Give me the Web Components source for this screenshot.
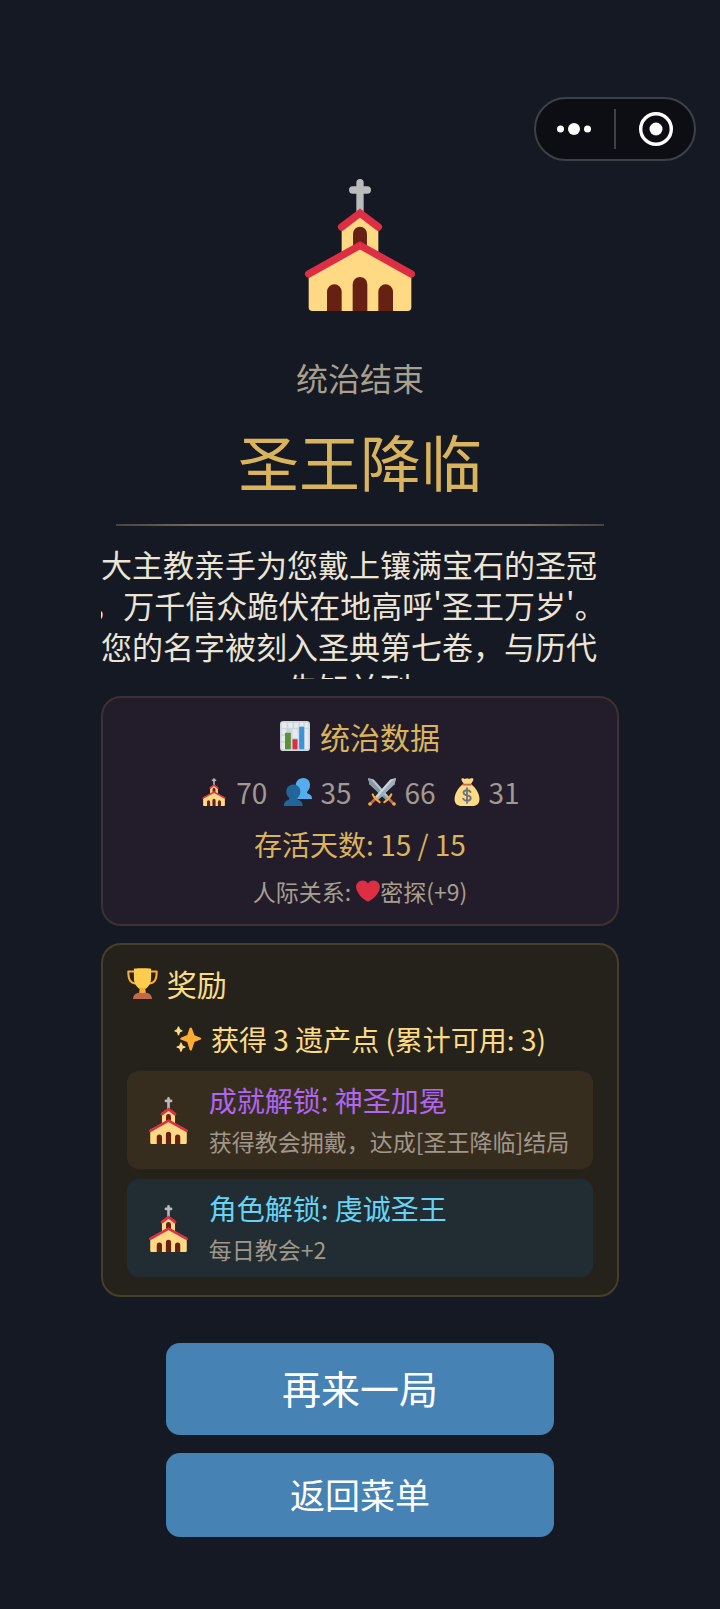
<!DOCTYPE html>
<html lang="zh-CN"><head><meta charset="utf-8"/><meta name="viewport" content="width=device-width, initial-scale=1"/><title>圣王降临</title><style>
    body {
      margin: 0;
      background: #151923;
      color: #ece5d6;
      font-family: "Noto Sans CJK SC", "Noto Sans", sans-serif;
    }
  </style><script>
function createCustomElement(name, elementClass) {
  let templateElement = document.getElementById(name);
  customElements.define(name, elementClass ||
    class extends HTMLElement {
      constructor() {
        super();
        this.attachShadow({mode: 'open'})
          .appendChild(templateElement.content.cloneNode(true));
      }
    }
  );
}
</script></head><body>

<template id="emoji-icon"><style>
  :host {
    display: inline-block;
    flex: none;
    width: var(--icon-size, 28px);
    height: var(--icon-size, 28px);
    white-space: normal;
  }
  svg {
    display: none;
    width: 100%;
    height: 100%;
  }
  :host([name="church"]) .church,
  :host([name="chart"]) .chart,
  :host([name="people"]) .people,
  :host([name="swords"]) .swords,
  :host([name="money"]) .money,
  :host([name="heart"]) .heart,
  :host([name="trophy"]) .trophy,
  :host([name="sparkles"]) .sparkles {
    display: block;
  }
</style>
<svg class="church" viewBox="0 0 36 36" aria-hidden="true">
  <path d="M18 1v9M16 3h4" fill="none" stroke="#b9bbbd" stroke-width="2" stroke-linecap="round"/>
  <path d="M13 12l5-3.500 5 3.500v10H13z" fill="#ffd983"/>
  <path d="M16.100 21v-6.100a1.900 1.900 0 0 1 3.800 0V21z" fill="#662113"/>
  <path d="M4 25l14-7.500L32 25v10a1 1 0 0 1-1 1H5a1 1 0 0 1-1-1z" fill="#ffd983"/>
  <path d="M9 36v-5.300a2 2 0 0 1 4 0V36zM16 36v-7.300a2 2 0 0 1 4 0V36zM23 36v-5.300a2 2 0 0 1 4 0V36z" fill="#662113"/>
  <path d="M13 13.100L18 9.300l5 3.800M4 25.900l14-7.800 14 7.800" fill="none" stroke="#dd2e44" stroke-width="2" stroke-linecap="round"/>
</svg>
<svg class="chart" viewBox="0 0 36 36" aria-hidden="true">
  <rect width="36" height="36" rx="4" fill="#ccd6dd"/>
  <path d="M2 2h6v6H2zM10 2h5v6h-5zM17 2h5v6h-5zM24 2h4v4h-4zM30 2h4v6h-4zM2 10h5v6H2zM15 10h6v6h-6zM2 18h4v6H2zM15 16h7v4h-7zM2 26h4v8H2zM30 10h4v24h-4z" fill="#e7ebef"/>
  <rect x="6" y="14" width="7" height="20" rx="1" fill="#5c913b"/>
  <rect x="15" y="22" width="6" height="12" rx="1" fill="#dd2e44"/>
  <rect x="23" y="7" width="6" height="27" rx="1" fill="#3b94d9"/>
</svg>
<svg class="people" viewBox="0 0 36 36" aria-hidden="true">
  <path d="M25 0c5 0 8.500 3.700 8.500 9 0 3.800-1.500 6.600-3.500 8.200-.800.700-.500 2.300.5 2.700C33.500 21 36 22.500 36 26v1H15V9.500C15 4 19.500 0 25 0z" fill="#55acee"/>
  <path d="M12 8.500c5.200 0 9 3.800 9 9 0 3.500-1.400 6.300-3.300 7.900-.9.800-.6 2.200.5 2.600 3.600 1.300 5.800 3 5.800 8H0c0-5 2.200-6.700 5.800-8 1.100-.4 1.400-1.800.5-2.600C4.400 23.800 3 21 3 17.500c0-5.200 3.800-9 9-9z" fill="#226699"/>
</svg>
<svg class="swords" viewBox="0 0 36 36" aria-hidden="true">
  <path d="M0 0l7.500 2L27 24l-4 4L2 8z" fill="#b5c3cd"/>
  <path d="M0 0l4.500 3L25 26l-2 2L2 8z" fill="#8899a6"/>
  <path d="M36 0l-7.500 2L9 24l4 4L34 8z" fill="#ccd6dd"/>
  <path d="M36 0l-4.500 3L11 26l2 2L34 8z" fill="#9daebb"/>
  <path d="M26 26l7 7M10 26l-7 7" stroke="#bf6952" stroke-width="3.500"/>
  <path d="M21 31c3-2 7-5 9-10M15 31c-3-2-7-5-9-10" fill="none" stroke="#ffac33" stroke-width="2.600" stroke-linecap="round"/>
  <circle cx="33.500" cy="33.500" r="2.300" fill="#ffac33"/>
  <circle cx="2.500" cy="33.500" r="2.300" fill="#ffac33"/>
</svg>
<svg class="money" viewBox="0 0 36 36" aria-hidden="true">
  <path d="M13 8C7 12 2 20 2 27c0 6.500 4 9 9 9h14c5 0 9-2.500 9-9 0-7-5-15-11-19z" fill="#ffd983"/>
  <path d="M11 1c2-2 3 1 5 0s3-1 4 0 4-2 6 0c1 1.500-2 5-3 7H14c-1-2-4-5.500-3-7z" fill="#fdd888"/>
  <path d="M12.500 8.500h11" stroke="#bf6952" stroke-width="2" stroke-linecap="round"/>
  <path d="M22.500 18c-1-1.800-2.500-2.300-4.500-2.300-2.500 0-4.500 1.200-4.500 3.300 0 4.500 9.300 2.200 9.300 6.700 0 2.200-2.200 3.500-4.800 3.500-2.200 0-4-.8-5-2.700M18 13v19" fill="none" stroke="#67757f" stroke-width="2.400" stroke-linecap="round"/>
</svg>
<svg class="heart" viewBox="0 0 36 36" aria-hidden="true">
  <path d="M35.900 11.800c0-5.400-4.400-9.700-9.800-9.700-3.300 0-6.300 1.700-8.100 4.200-1.800-2.500-4.700-4.200-8.100-4.200C4.500 2.100.1 6.400.1 11.800c0 .8.1 1.500.3 2.200C1.800 22.500 11.200 31.500 18 34c6.800-2.500 16.200-11.500 17.600-20 .2-.7.3-1.400.3-2.200z" fill="#dd2e44"/>
</svg>
<svg class="trophy" viewBox="0 0 36 36" aria-hidden="true">
  <path d="M9 4H1.500c0 8 1.500 13.500 9.500 14M27 4h7.500c0 8-1.500 13.500-9.500 14" fill="none" stroke="#ffac33" stroke-width="2.400" stroke-linejoin="round"/>
  <path d="M8 1c0-1 20-1 20 0v10c0 7-3 11-7 13.500V29h-6v-4.500C11 22 8 18 8 11z" fill="#ffcc4d"/>
  <path d="M15 23h6l1 7h-8z" fill="#ffac33"/>
  <path d="M7 36c0-4 3-7 6-7h10c3 0 6 3 6 7z" fill="#c1694f"/>
</svg>
<svg class="sparkles" viewBox="0 0 36 36" aria-hidden="true">
  <path d="M34.300 16.300l-8-3.200-3.400-9.100c-.3-1.200-2.300-1.200-2.700 0L17 13l-8.300 3.300c-1 .4-1 2 0 2.500L17 22l3.200 10c.4 1.200 2.400 1.200 2.700 0l3.400-10 8-3.200c1-.5 1-2 0-2.500z" fill="#ffac33"/>
  <path d="M14.300 27.500l-3.100-1.200L9.800 23c-.3-.8-1.500-.8-1.700 0l-1.300 3.300-3 1.200c-.8.300-.8 1.300 0 1.600l3 1.200 1.300 3.700c.2.700 1.400.7 1.700 0l1.400-3.700 3.100-1.200c.8-.3.800-1.300 0-1.600zM10.500 6.700L7.900 5.600 6.600 2.400c-.2-.7-1.400-.7-1.700 0L3.700 5.600 1 6.700c-.7.300-.7 1.300 0 1.600l2.700 1.100L4.900 13c.3.700 1.500.7 1.700 0l1.300-3.600 2.600-1.100c.7-.3.700-1.300 0-1.600z" fill="#ffd983"/>
</svg></template><script>createCustomElement('emoji-icon');</script>

<template id="capsule-menu"><style>
  :host {
    display: flex;
    align-self: flex-end;
    align-items: center;
    box-sizing: border-box;
    width: 162px;
    height: 64px;
    margin-right: 24px;
    border: 2px solid #3d4047;
    border-radius: 32px;
    background: #0c0e14;
  }
  button {
    flex: 1;
    display: flex;
    justify-content: center;
    padding: 0;
    border: 0;
    background: none;
    color: #fff;
    cursor: pointer;
  }
  .line {
    width: 2px;
    height: 40px;
    background: #3d4047;
  }
</style><button type="button" aria-label="更多"><svg width="36" height="36" viewBox="0 0 36 36" fill="currentColor">
  <circle cx="3.500" cy="18" r="3.500"/><circle cx="17" cy="18" r="6"/><circle cx="30.500" cy="18" r="3.500"/>
</svg></button><span class="line"></span><button type="button" aria-label="关闭"><svg width="36" height="36" viewBox="0 0 36 36" fill="currentColor">
  <circle cx="19" cy="18" r="15.300" fill="none" stroke="currentColor" stroke-width="3.400"/><circle cx="19" cy="18" r="6.500"/>
</svg></button></template><script>createCustomElement('capsule-menu');</script>

<template id="ending-heading"><style>
  :host {
    display: flex;
    flex-direction: column;
    align-items: center;
    --icon-size: 132px;
  }
  ::slotted(h2) {
    margin: 44px 0 0;
    color: #a89f8e;
    font-size: 32px;
    font-weight: normal;
    line-height: 44px;
  }
  ::slotted(h1) {
    margin: 22px 0 0;
    color: #d9b45c;
    font-size: 61px;
    font-weight: normal;
    line-height: 80px;
  }
  hr {
    box-sizing: border-box;
    width: 94%;
    height: 2px;
    margin: 23px 0 0;
    border: 0;
    background: linear-gradient(90deg, #4a4342, #75665a 15%, #75665a 85%, #4a4342);
  }
</style><slot></slot><hr/></template><script>createCustomElement('ending-heading');</script>

<template id="ending-story"><style>
  /* Fixed reading window: long lines and the overflow row are cut off. */
  :host {
    display: flex;
    flex-direction: column;
    align-items: center;
    overflow: hidden;
    height: 136px;
    margin: 17px 22px 17px 0;
    font-size: 31px;
    line-height: 41px;
    white-space: nowrap;
  }
  ::slotted(p) {
    flex: none;
    margin: 0;
  }
</style><slot></slot></template><script>createCustomElement('ending-story');</script>

<template id="stats-panel"><style>
  :host {
    display: flex;
    flex-direction: column;
    align-items: center;
    gap: 10px;
    padding: 16px;
    border: 2px solid #3a3335;
    border-radius: 20px;
    background: #231d2b;
  }
  ::slotted(h3) {
    display: flex;
    align-items: center;
    gap: 10px;
    margin: 0;
    color: #d9b45c;
    font-size: 30px;
    font-weight: normal;
    line-height: 44px;
    --icon-size: 30px;
  }
  .stats {
    display: flex;
    gap: 17px;
    padding-top: 2px;
  }
  ::slotted(p) {
    display: flex;
    align-items: center;
    margin: 0;
    font-size: 23px;
    line-height: 34px;
    color: #a89f8e;
    white-space: pre;
    --icon-size: 24px;
  }
  ::slotted(.days) {
    color: #d9b45c;
    font-size: 28px;
    line-height: 40px;
  }
</style><slot name="title"></slot><div class="stats"><slot name="stat"></slot></div><slot></slot></template><script>createCustomElement('stats-panel');</script>

<template id="stat-value"><style>
  :host {
    display: flex;
    align-items: center;
    gap: 8px;
    color: #a09a92;
    font-size: 28px;
    line-height: 44px;
  }
</style><emoji-icon></emoji-icon><slot></slot></template><script>
createCustomElement('stat-value', class extends HTMLElement {
  constructor() {
    super();
    this.attachShadow({mode: 'open'})
      .appendChild(document.getElementById('stat-value').content.cloneNode(true));
  }
  connectedCallback() {
    this.shadowRoot.querySelector('emoji-icon')
      .setAttribute('name', this.getAttribute('icon'));
  }
});
</script>

<template id="reward-panel"><style>
  :host {
    display: flex;
    flex-direction: column;
    gap: 10px;
    margin-top: 17px;
    padding: 16px 24px 18px;
    border: 2px solid #454029;
    border-radius: 20px;
    background: #25221c;
    color: #fbdc84;
  }
  ::slotted(h3), ::slotted(p) {
    display: flex;
    align-items: center;
    gap: 9px;
    margin: 0;
    font-weight: normal;
    line-height: 44px;
  }
  ::slotted(h3) {
    font-size: 30px;
    --icon-size: 31px;
  }
  ::slotted(p) {
    justify-content: center;
    padding-top: 2px;
    font-size: 28px;
  }
</style><slot></slot></template><script>createCustomElement('reward-panel');</script>

<template id="reward-row"><style>
  :host {
    display: flex;
    align-items: center;
    gap: 17px;
    padding: 8px 18px;
    border-radius: 12px;
    background: #372d1f;
    color: #b066f0;
    --icon-size: 47px;
  }
  :host([kind="role"]) {
    background: #212d33;
    color: #66d4f5;
  }
  ::slotted(h4) {
    margin: 0;
    font-size: 28px;
    font-weight: normal;
    line-height: 42px;
  }
  .desc {
    color: #a0978a;
    font-size: 23px;
    line-height: 40px;
    white-space: nowrap;
  }
</style><emoji-icon name="church"></emoji-icon><div><slot name="title"></slot><div class="desc"><slot></slot></div></div></template><script>createCustomElement('reward-row');</script>

<template id="game-button"><style>
  :host {
    display: block;
  }
  button {
    display: block;
    width: 100%;
    height: 84px;
    padding: 0 0 4px;
    border: 0;
    border-radius: 14px;
    background: #4682b4;
    color: #fff;
    font: inherit;
    font-size: 35px;
    cursor: pointer;
  }
  :host([primary]) button {
    height: 92px;
    font-size: 39px;
  }
</style><button type="button"><slot></slot></button></template><script>createCustomElement('game-button');</script>

<template id="ending-screen"><style>
  :host {
    display: flex;
    flex-direction: column;
    align-items: center;
    box-sizing: border-box;
    min-height: 100vh;
    padding: 97px 0 60px;
  }
  main {
    width: 72%;
    margin-top: 18px;
  }
  .actions {
    display: flex;
    flex-direction: column;
    gap: 18px;
    width: 54%;
    margin-top: 46px;
  }
</style><capsule-menu></capsule-menu><main><slot></slot></main><div class="actions"><slot name="action"></slot></div></template><script>createCustomElement('ending-screen');</script>

<ending-screen>
  <ending-heading>
    <emoji-icon name="church"></emoji-icon>
    <h2>统治结束</h2>
    <h1>圣王降临</h1>
  </ending-heading>

  <ending-story>
    <p>大主教亲手为您戴上镶满宝石的圣冠</p>
    <p>，万千信众跪伏在地高呼'圣王万岁'。</p>
    <p>您的名字被刻入圣典第七卷，与历代</p>
    <p>先知并列</p>
  </ending-story>

  <stats-panel>
    <h3 slot="title"><emoji-icon name="chart"></emoji-icon>统治数据</h3>
    <stat-value slot="stat" icon="church">70</stat-value>
    <stat-value slot="stat" icon="people">35</stat-value>
    <stat-value slot="stat" icon="swords">66</stat-value>
    <stat-value slot="stat" icon="money">31</stat-value>
    <p class="days">存活天数: 15 / 15</p>
    <p>人际关系: <emoji-icon name="heart"></emoji-icon>密探(+9)</p>
  </stats-panel>

  <reward-panel>
    <h3><emoji-icon name="trophy"></emoji-icon>奖励</h3>
    <p><emoji-icon name="sparkles"></emoji-icon>获得 3 遗产点 (累计可用: 3)</p>
    <reward-row kind="achievement">
      <h4 slot="title">成就解锁: 神圣加冕</h4>
      获得教会拥戴，达成[圣王降临]结局
    </reward-row>
    <reward-row kind="role">
      <h4 slot="title">角色解锁: 虔诚圣王</h4>
      每日教会+2
    </reward-row>
  </reward-panel>

  <game-button slot="action" primary>再来一局</game-button>
  <game-button slot="action">返回菜单</game-button>
</ending-screen>
</body></html>
